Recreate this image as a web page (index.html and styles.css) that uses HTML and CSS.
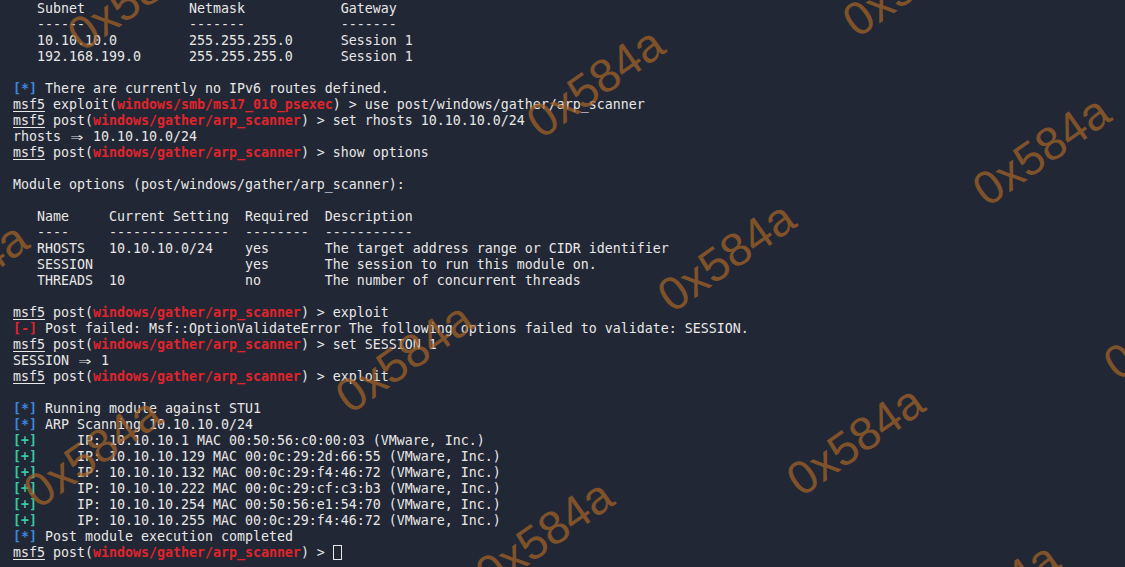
FILE: index.html
```html
<!DOCTYPE html>
<html lang="en">
<head>
  <meta charset="UTF-8" />
  <title>msfconsole - arp_scanner</title>
  <link rel="stylesheet" href="styles.css">
</head>
<body>
  <div class="terminal">
<pre class="output">   Subnet             Netmask            Gateway
   ------             -------            -------
   10.10.10.0         255.255.255.0      Session 1
   192.168.199.0      255.255.255.0      Session 1

<span class="info">[*]</span> There are currently no IPv6 routes defined.
<span class="prompt">msf5</span> exploit(<span class="module">windows/smb/ms17_010_psexec</span>) &gt; use post/windows/gather/arp_scanner
<span class="prompt">msf5</span> post(<span class="module">windows/gather/arp_scanner</span>) &gt; set rhosts 10.10.10.0/24
rhosts <span class="arrow"><span>⇒</span></span> 10.10.10.0/24
<span class="prompt">msf5</span> post(<span class="module">windows/gather/arp_scanner</span>) &gt; show options

Module options (post/windows/gather/arp_scanner):

   Name     Current Setting  Required  Description
   ----     ---------------  --------  -----------
   RHOSTS   10.10.10.0/24    yes       The target address range or CIDR identifier
   SESSION                   yes       The session to run this module on.
   THREADS  10               no        The number of concurrent threads

<span class="prompt">msf5</span> post(<span class="module">windows/gather/arp_scanner</span>) &gt; exploit
<span class="error">[-]</span> Post failed: Msf::OptionValidateError The following options failed to validate: SESSION.
<span class="prompt">msf5</span> post(<span class="module">windows/gather/arp_scanner</span>) &gt; set SESSION 1
SESSION <span class="arrow"><span>⇒</span></span> 1
<span class="prompt">msf5</span> post(<span class="module">windows/gather/arp_scanner</span>) &gt; exploit

<span class="info">[*]</span> Running module against STU1
<span class="info">[*]</span> ARP Scanning 10.10.10.0/24
<span class="good">[+]</span>     IP: 10.10.10.1 MAC 00:50:56:c0:00:03 (VMware, Inc.)
<span class="good">[+]</span>     IP: 10.10.10.129 MAC 00:0c:29:2d:66:55 (VMware, Inc.)
<span class="good">[+]</span>     IP: 10.10.10.132 MAC 00:0c:29:f4:46:72 (VMware, Inc.)
<span class="good">[+]</span>     IP: 10.10.10.222 MAC 00:0c:29:cf:c3:b3 (VMware, Inc.)
<span class="good">[+]</span>     IP: 10.10.10.254 MAC 00:50:56:e1:54:70 (VMware, Inc.)
<span class="good">[+]</span>     IP: 10.10.10.255 MAC 00:0c:29:f4:46:72 (VMware, Inc.)
<span class="info">[*]</span> Post module execution completed
<span class="prompt">msf5</span> post(<span class="module">windows/gather/arp_scanner</span>) &gt; <span class="cursor"></span></pre>

    <!-- watermark -->
    <div class="watermark wm-1">0x584a</div>
    <div class="watermark wm-2">0x584a</div>
    <div class="watermark wm-3">0x584a</div>
    <div class="watermark wm-4">0x584a</div>
    <div class="watermark wm-5">0x584a</div>
    <div class="watermark wm-6">0x584a</div>
    <div class="watermark wm-7">0x584a</div>
    <div class="watermark wm-8">0x584a</div>
    <div class="watermark wm-9">0x584a</div>
    <div class="watermark wm-10">0x584a</div>
    <div class="watermark wm-11">0x584a</div>
    <div class="watermark wm-12">0x584a</div>
  </div>
</body>
</html>
```

FILE: styles.css
```css
* {
  margin: 0;
  padding: 0;
  box-sizing: border-box;
}

html, body {
  width: 1125px;
  height: 567px;
  overflow: hidden;
  background: #222735;
}

.terminal {
  position: relative;
  width: 1125px;
  height: 567px;
  padding: 1px 0 0 13px;
  overflow: hidden;
}

.output {
  font-family: 'DejaVu Sans Mono', 'Liberation Mono', monospace;
  font-size: 13.29px;
  line-height: 16px;
  color: #e8e8e8;
  white-space: pre;
}

.prompt {
  text-decoration: underline;
  text-underline-offset: 2px;
}

.module {
  color: #e0242b;
  font-weight: bold;
}

.info {
  color: #3a87dc;
  font-weight: bold;
}

.good {
  color: #38c6a4;
  font-weight: bold;
}

.error {
  color: #e0242b;
  font-weight: bold;
}

/* "=>" ligature, two cells wide */
.arrow {
  display: inline-block;
  width: 2ch;
  line-height: 1;
  text-align: center;
}

.arrow span {
  display: inline-block;
  transform: scale(1.6, 1.15);
}

.cursor {
  display: inline-block;
  width: 9px;
  height: 15px;
  border: 1px solid #e8e8e8;
  vertical-align: -3px;
}

.watermark {
  position: absolute;
  font-family: 'Liberation Sans', Arial, sans-serif;
  font-size: 47px;
  line-height: 1;
  color: rgba(165, 100, 38, 0.72);
  white-space: nowrap;
  transform: translate(-50%, -50%) rotate(-35deg);
  pointer-events: none;
}

.wm-1 { left: 136px; top: -5px; }
.wm-2 { left: 911px; top: -19px; }
.wm-3 { left: 595px; top: 82px; }
.wm-4 { left: 1041px; top: 150px; }
.wm-5 { left: -41px; top: 277px; }
.wm-6 { left: 726px; top: 256px; }
.wm-7 { left: 1172px; top: 324px; }
.wm-8 { left: 404px; top: 357px; }
.wm-9 { left: 855px; top: 440px; }
.wm-10 { left: 92px; top: 452px; }
.wm-11 { left: 544px; top: 534px; }
.wm-12 { left: 990px; top: 597px; }
```
